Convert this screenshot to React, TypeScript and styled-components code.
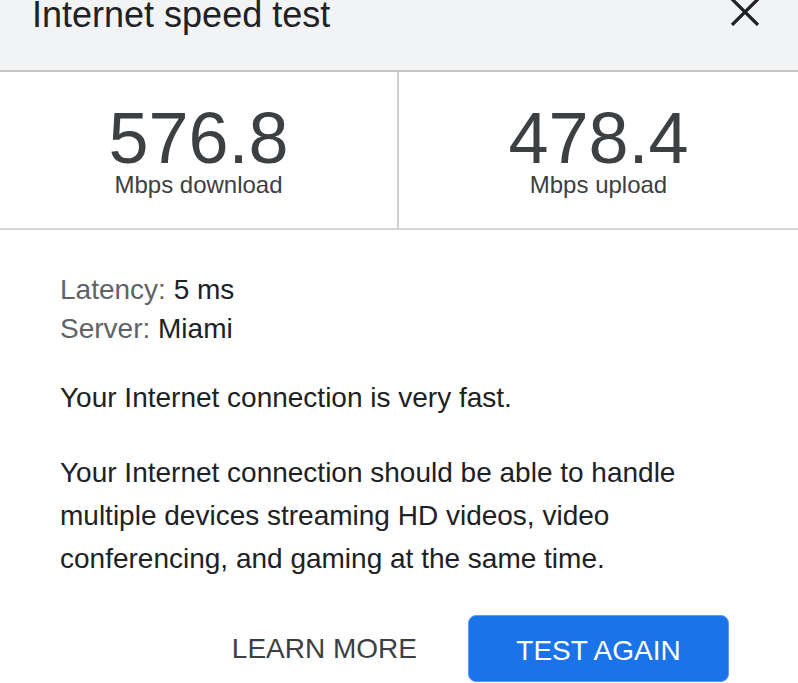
import React from "react";
import styled, { createGlobalStyle } from "styled-components";

const GlobalStyle = createGlobalStyle`
  html, body {
    margin: 0;
    padding: 0;
    background: #ffffff;
  }
  body {
    font-family: "Liberation Sans", Arial, Helvetica, sans-serif;
    -webkit-font-smoothing: antialiased;
  }
  * { box-sizing: border-box; }
`;

const Dialog = styled.div`
  width: 798px;
  display: flex;
  flex-direction: column;
  background: #ffffff;
  overflow: hidden;
`;

const Header = styled.header`
  height: 72px;
  display: flex;
  align-items: flex-start;
  justify-content: space-between;
  padding: 0 38px 0 32px;
  background: #f1f3f4;
  border-bottom: 2px solid #c4c4c4;
`;

const Title = styled.h1`
  margin: 0;
  font-size: 36px;
  line-height: 30px;
  font-weight: 400;
  color: #202124;
`;

const CloseButton = styled.button`
  display: flex;
  border: none;
  background: transparent;
  padding: 0;
  margin: 0;
  cursor: pointer;
`;

const Metrics = styled.section`
  display: grid;
  grid-template-columns: 1fr 1fr;
  border-bottom: 2px solid #d6d6d6;
`;

const Metric = styled.div<{ $divider?: boolean }>`
  display: flex;
  flex-direction: column;
  align-items: center;
  padding: 31px 0 31px;
  border-right: ${(p) => (p.$divider ? "2px solid #d2d2d2" : "none")};
  height: 156px;
`;

const Value = styled.div`
  font-size: 72px;
  line-height: 70px;
  color: #3c4043;
`;

const Unit = styled.div`
  font-size: 24px;
  line-height: 24px;
  color: #3c4043;
`;

const Body = styled.section`
  padding: 40px 60px 0;
  display: flex;
  flex-direction: column;
`;

const InfoList = styled.div`
  display: flex;
  flex-direction: column;
`;

const InfoRow = styled.div`
  font-size: 28px;
  line-height: 39px;
  color: #202124;
`;

const InfoLabel = styled.span`
  color: #5f6368;
`;

const Paragraph = styled.p<{ $gap: number }>`
  margin: ${(p) => p.$gap}px 0 0;
  font-size: 28px;
  line-height: 43px;
  color: #202124;
`;

const Actions = styled.div`
  display: flex;
  justify-content: flex-end;
  align-items: center;
  gap: 27px;
  padding: 35px 69px 40px 0;
`;

const TextButton = styled.button`
  border: none;
  background: transparent;
  font-family: "Liberation Sans", Arial, Helvetica, sans-serif;
  font-size: 28px;
  line-height: 67px;
  height: 67px;
  padding: 0 24px;
  color: #3c4043;
  cursor: pointer;
`;

const PrimaryButton = styled.button`
  border: 1px solid #5b9bf0;
  background: #1a73e8;
  border-radius: 8px;
  font-family: "Liberation Sans", Arial, Helvetica, sans-serif;
  font-size: 28px;
  line-height: 69px;
  height: 67px;
  width: 261px;
  padding: 0;
  color: #ffffff;
  cursor: pointer;
`;

export default function App() {
  return (
    <>
      <GlobalStyle />
      <Dialog>
        <Header>
          <Title>Internet speed test</Title>
          <CloseButton aria-label="Close">
            <svg width="30" height="26" viewBox="0 0 30 26">
              <path
                d="M2 -1 L28 25 M28 -1 L2 25"
                stroke="#202124"
                strokeWidth="3.2"
                fill="none"
              />
            </svg>
          </CloseButton>
        </Header>
        <Metrics>
          <Metric $divider>
            <Value>576.8</Value>
            <Unit>Mbps download</Unit>
          </Metric>
          <Metric>
            <Value>478.4</Value>
            <Unit>Mbps upload</Unit>
          </Metric>
        </Metrics>
        <Body>
          <InfoList>
            <InfoRow>
              <InfoLabel>Latency:</InfoLabel> 5 ms
            </InfoRow>
            <InfoRow>
              <InfoLabel>Server:</InfoLabel> Miami
            </InfoRow>
          </InfoList>
          <Paragraph $gap={28}>Your Internet connection is very fast.</Paragraph>
          <Paragraph $gap={32}>
            Your Internet connection should be able to handle multiple devices
            streaming HD videos, video conferencing, and gaming at the same
            time.
          </Paragraph>
        </Body>
        <Actions>
          <TextButton>LEARN MORE</TextButton>
          <PrimaryButton>TEST AGAIN</PrimaryButton>
        </Actions>
      </Dialog>
    </>
  );
}
